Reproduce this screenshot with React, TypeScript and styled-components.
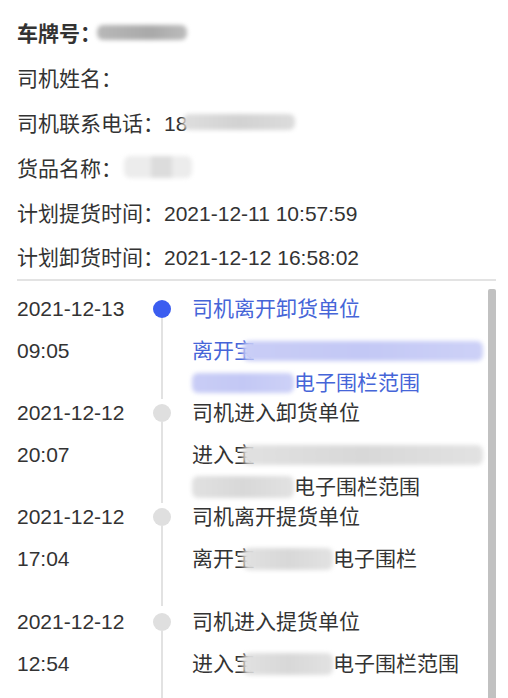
import React from "react";
import styled, { createGlobalStyle, css } from "styled-components";

const Global = createGlobalStyle`
  html, body { margin: 0; padding: 0; background: #fff; }
  body { font-family: "Liberation Sans", "Noto Sans CJK SC", sans-serif; }
`;

const Page = styled.div`
  width: 508px;
  height: 698px;
  overflow: hidden;
  box-sizing: border-box;
  padding: 10px 12px 0 17px;
  color: #333;
  font-size: 21px;
`;

const Info = styled.div`
  display: flex;
  flex-direction: column;
`;

const InfoRow = styled.div<{ $bold?: boolean }>`
  display: flex;
  align-items: center;
  height: 44.8px;
  white-space: nowrap;
  font-weight: ${(p) => (p.$bold ? 700 : 400)};
`;

const Divider = styled.div`
  height: 2px;
  background: #e3e3e3;
`;

type Tone = "dark" | "light" | "pale" | "blue" | "gray";
const toneStyles: Record<Tone, ReturnType<typeof css>> = {
  dark: css`background: linear-gradient(90deg, #b8b8b8, #a9a9a9 60%, #bcbcbc);`,
  light: css`background: linear-gradient(90deg, #dedede, #d2d2d2 50%, #dcdcdc);`,
  pale: css`background: linear-gradient(90deg, #ececec 0 40%, #dcdcdc 40% 70%, #ececec 70%);`,
  blue: css`background: linear-gradient(90deg, #c9cdf6, #c3c8f5 50%, #cdd1f7);`,
  gray: css`background: linear-gradient(90deg, #e1e1e1, #d8d8d8 50%, #e2e2e2);`,
};

const Blur = styled.span<{ $w: number; $h: number; $tone: Tone; $ml?: number }>`
  display: inline-block;
  flex: none;
  width: ${(p) => p.$w}px;
  height: ${(p) => p.$h}px;
  margin-left: ${(p) => p.$ml ?? 0}px;
  border-radius: 6px;
  filter: blur(2px);
  vertical-align: middle;
  ${(p) => toneStyles[p.$tone]}
`;

const Timeline = styled.div`
  position: relative;
  padding-top: 12px;
`;

const Thumb = styled.div`
  position: absolute;
  right: 0;
  top: 8px;
  width: 8px;
  height: 500px;
  background: #c1c1c1;
  border-radius: 2px 2px 0 0;
`;

const Item = styled.div`
  display: grid;
  grid-template-columns: 136px 18px 1fr;
  height: 104.3px;
`;

const Side = styled.div`
  display: flex;
  flex-direction: column;
  gap: 10px;
  line-height: 32px;
  white-space: nowrap;
`;

const Rail = styled.div`
  display: flex;
  flex-direction: column;
  align-items: center;
`;

const Dot = styled.div<{ $active?: boolean }>`
  width: 18px;
  height: 18px;
  border-radius: 50%;
  margin-top: 7px;
  flex: none;
  background: ${(p) => (p.$active ? "#3b5df0" : "#dfdfdf")};
`;

const Line = styled.div`
  width: 2px;
  flex: 1;
  background: #e2e2e2;
`;

const Body = styled.div<{ $active?: boolean }>`
  display: flex;
  flex-direction: column;
  margin-left: 21px;
  line-height: 32px;
  white-space: nowrap;
  color: ${(p) => (p.$active ? "#4665d8" : "#333")};
`;

const Desc = styled.div`
  margin-top: 10px;
  display: flex;
  flex-direction: column;
`;

const DescLine = styled.div`
  display: flex;
  align-items: center;
  height: 32px;
`;

export default function App() {
  return (
    <>
      <Global />
      <Page>
        <Info>
          <InfoRow $bold>
            车牌号：<Blur $w={90} $h={15} $tone="dark" $ml={-4} />
          </InfoRow>
          <InfoRow>司机姓名：</InfoRow>
          <InfoRow>
            司机联系电话：18<Blur $w={112} $h={16} $tone="light" $ml={-4} />
          </InfoRow>
          <InfoRow>
            货品名称：<Blur $w={68} $h={22} $tone="pale" $ml={2} />
          </InfoRow>
          <InfoRow>计划提货时间：2021-12-11 10:57:59</InfoRow>
          <InfoRow>计划卸货时间：2021-12-12 16:58:02</InfoRow>
        </Info>
        <Divider />
        <Timeline>
          <Thumb />
          <Item>
            <Side>
              <span>2021-12-13</span>
              <span>09:05</span>
            </Side>
            <Rail>
              <Dot $active />
              <Line />
            </Rail>
            <Body $active>
              <span>司机离开卸货单位</span>
              <Desc>
                <DescLine>
                  离开宝<Blur $w={240} $h={20} $tone="blue" $ml={-12} />
                </DescLine>
                <DescLine>
                  <Blur $w={102} $h={20} $tone="blue" />
                  电子围栏范围
                </DescLine>
              </Desc>
            </Body>
          </Item>
          <Item>
            <Side>
              <span>2021-12-12</span>
              <span>20:07</span>
            </Side>
            <Rail>
              <Dot />
              <Line />
            </Rail>
            <Body>
              <span>司机进入卸货单位</span>
              <Desc>
                <DescLine>
                  进入宝<Blur $w={240} $h={20} $tone="gray" $ml={-12} />
                </DescLine>
                <DescLine>
                  <Blur $w={102} $h={22} $tone="gray" />
                  电子围栏范围
                </DescLine>
              </Desc>
            </Body>
          </Item>
          <Item>
            <Side>
              <span>2021-12-12</span>
              <span>17:04</span>
            </Side>
            <Rail>
              <Dot />
              <Line />
            </Rail>
            <Body>
              <span>司机离开提货单位</span>
              <Desc>
                <DescLine>
                  离开宝<Blur $w={90} $h={22} $tone="gray" $ml={-12} />
                  电子围栏
                </DescLine>
              </Desc>
            </Body>
          </Item>
          <Item>
            <Side>
              <span>2021-12-12</span>
              <span>12:54</span>
            </Side>
            <Rail>
              <Dot />
              <Line />
            </Rail>
            <Body>
              <span>司机进入提货单位</span>
              <Desc>
                <DescLine>
                  进入宝<Blur $w={90} $h={22} $tone="gray" $ml={-12} />
                  电子围栏范围
                </DescLine>
              </Desc>
            </Body>
          </Item>
        </Timeline>
      </Page>
    </>
  );
}
